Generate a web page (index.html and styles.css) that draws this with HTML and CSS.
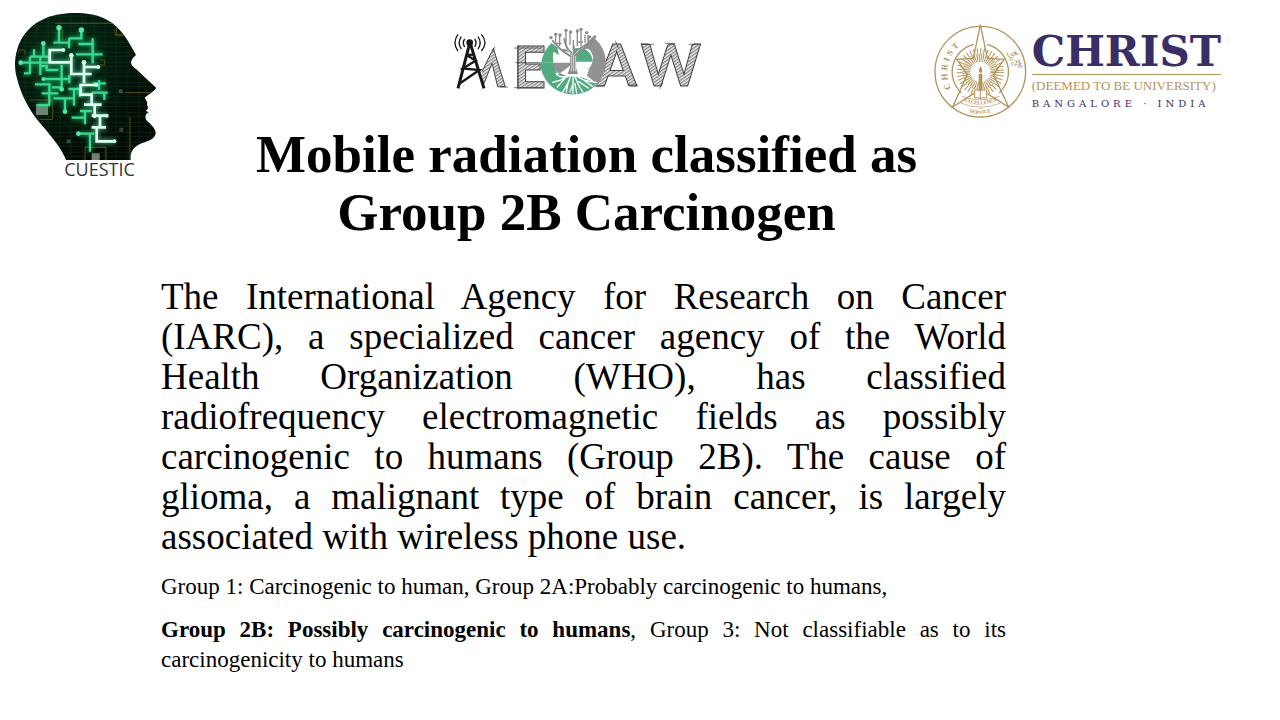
FILE: index.html
```html
<!DOCTYPE html>
<html lang="en">
<head>
<meta charset="utf-8">
<meta name="viewport" content="width=device-width, initial-scale=1">
<title>Mobile radiation classified as Group 2B Carcinogen</title>
<link rel="stylesheet" href="styles.css">
</head>
<body>
<div class="slide">
  <figure class="cuestic">
    <svg class="head-art" viewBox="0 0 480 480" aria-hidden="true">
      <defs>
        <clipPath id="head"><path d="M198 480C190 455 160 415 125 375C85 330 62 280 51 235C43 205 43 180 51 150C63 105 95 70 140 53C190 33 270 35 310 54C350 72 375 105 391 135L408 165C400 172 394 179 393 188C394 195 400 200 408 207L469 264C460 276 444 284 434 293C438 300 444 307 441 315C444 320 447 328 437 332L446 337C435 343 435 350 438 359C450 371 466 384 467 397C468 411 455 420 438 425C410 434 388 447 392 480Z"/></clipPath>
        <radialGradient id="headFill" cx=".4" cy=".35" r=".65"><stop offset="0" stop-color="#04301a"/><stop offset=".5" stop-color="#02180d"/><stop offset="1" stop-color="#020803"/></radialGradient>
        <filter id="glow" x="-20%" y="-20%" width="140%" height="140%"><feGaussianBlur stdDeviation="6"/></filter>
        <pattern id="board" width="34" height="30" patternUnits="userSpaceOnUse"><path d="M0 7H34M9 0V30M0 19H34" stroke="#174319" stroke-width="2" opacity=".55"/></pattern>
      </defs>
      <g clip-path="url(#head)">
        <rect width="480" height="480" fill="url(#headFill)"/>
        <rect width="480" height="480" fill="url(#board)"/>
        <g fill="none" stroke="#584c18" stroke-width="3"><path d="M165 70H350V105H380M188 90V120M55 150H75V165M88 300H158V358H118M255 480V442H318V480M390 350V480M375 278H450M345 85V105H372M300 180H314V195H300"/></g>
        <g fill="#747f76"><path d="M108 312H144V345H108zM275 460H299V480H275z"/><path d="M358 383H370V395H358zM200 418H212V430H200zM356 268H368V280H356z" opacity=".5"/></g>
        <path d="M177 85V128M160 128H207V145M207 115H244V90M207 115V130M235 132H280M278 115V190M228 163H308M130 130V168M102 148V170M62 188H145M90 170H145M90 170V222M72 220H90M121 170V225M121 198H140V210H175M185 195V268M130 237H208M208 225V250M105 253H148V285M125 280H175M148 280V315M112 315H150M160 295H225M195 295V335M222 265V317M205 267H240M240 265V290M297 240V270M280 250H318M275 278H323M313 278V300M240 333H275M255 333V373M215 353H255M235 401H283M270 401V455M155 262H185" fill="none" stroke="#19c776" stroke-width="15" opacity=".55" filter="url(#glow)"/>
        <path d="M177 85V128M160 128H207V145M207 115H244V90M207 115V130M235 132H280M278 115V190M228 163H308M130 130V168M102 148V170M62 188H145M90 170H145M90 170V222M72 220H90M121 170V225M121 198H140V210H175M185 195V268M130 237H208M208 225V250M105 253H148V285M125 280H175M148 280V315M112 315H150M160 295H225M195 295V335M222 265V317M205 267H240M240 265V290M297 240V270M280 250H318M275 278H323M313 278V300M240 333H275M255 333V373M215 353H255M235 401H283M270 401V455M155 262H185" fill="none" stroke="#3bd990" stroke-width="7"/>
        <g fill="#55e6a4"><circle cx="177" cy="83" r="8"/><circle cx="244" cy="90" r="8"/><circle cx="130" cy="130" r="7"/><circle cx="62" cy="188" r="7"/><circle cx="235" cy="401" r="7"/><circle cx="195" cy="335" r="7"/><circle cx="185" cy="268" r="7"/><circle cx="130" cy="237" r="6"/></g>
        <path d="M190 150H149V187H214M214 167V222H275M252 187V250M252 201H295M289 255H242V284H275V314M252 314H305M284 314V354M275 347H320M300 347V382M275 382H318M290 382V424H345" fill="none" stroke="#6df0b8" stroke-width="14" opacity=".6" filter="url(#glow)"/>
        <path d="M190 150H149V187H214M214 167V222H275M252 187V250M252 201H295M289 255H242V284H275V314M252 314H305M284 314V354M275 347H320M300 347V382M275 382H318M290 382V424H345" fill="none" stroke="#dcfff0" stroke-width="8"/>
        <g fill="#c4ffe2"><circle cx="190" cy="150" r="6"/><circle cx="214" cy="166" r="7"/><circle cx="252" cy="187" r="7"/><circle cx="295" cy="201" r="6"/><circle cx="289" cy="255" r="6"/><circle cx="320" cy="347" r="6"/><circle cx="343" cy="424" r="6"/></g>
      </g>
    </svg>
    <figcaption class="cuestic-name">CUESTIC</figcaption>
  </figure>

  <div class="content">
    <header class="logos">
      <svg class="megaw" viewBox="0 0 810 240" role="img" aria-label="MEGAW">
        <defs>
          <pattern id="hatch" width="8" height="8" patternUnits="userSpaceOnUse" patternTransform="rotate(-35)"><rect width="8" height="8" fill="#eee"/><path d="M0 2H8" stroke="#666" stroke-width="3"/></pattern>
        </defs>
        <g class="sketch">
          <text x="220" y="204">E</text>
          <text x="470" y="197">A</text>
          <text x="602" y="199">W</text>
        </g>
        <path d="M126 155L160 85L196 200H173L156 130L128 200" fill="url(#hatch)" stroke="#444" stroke-width="3"/>
        <path d="M222 84H304M234 75V208M222 203H308M226 128H302M460 198H496M562 195H594M604 73H642M674 70H706M746 73H775M165 80L158 94M180 201H204M526 62L535 84M658 206L668 190" stroke="#333" stroke-width="2"/>
        <g fill="none" stroke="#171717">
          <path d="M89 70L54 205M91 70L132 205" stroke-width="9"/><path d="M80 105L107 122L69 145L118 150L57 192M78 105L100 104" stroke-width="7"/>
          <path d="M74 57Q66 68 74 81M64 50Q51 68 64 87M54 43Q36 68 54 93M104 57Q112 68 104 81M114 50Q127 68 114 87M124 43Q146 68 124 93" stroke-width="4"/>
        </g>
        <circle cx="89" cy="68" r="10" fill="#171717"/>
        <path d="M304 127A96 96 0 0 1 334 70L330 66L352 82L357 105L340 95Q337 112 340 127Z" fill="#52aa80"/>
        <path d="M301 127H340L352 162L395 158L468 195A98 98 0 0 1 301 127" fill="#52aa80"/>
        <path d="M340 128H398V164Q345 174 340 128" fill="#929292"/>
        <path d="M398 125V86Q450 75 459 125Z" fill="#52aa80"/>
        <path d="M457 50A96 96 0 0 1 494 155L471 200L457 180L434 162L425 140L447 146Q472 112 446 87L433 86Z" fill="#929292"/>
        <path d="M360 160Q395 135 402 127L447 148L438 175L398 175Z" fill="#fff"/>
        <path d="M340 185Q400 150 466 190A98 98 0 0 1 340 200Z" fill="#52aa80"/>
        <g fill="none" stroke="#fff" stroke-width="4" stroke-linecap="round">
          <path d="M397 150Q390 175 338 187M385 168Q357 175 348 160M375 175L352 201M392 165Q387 190 368 216M384 189L379 216M399 160V220M403 160Q408 185 428 216M416 185L445 204M407 166Q425 183 469 187M430 179L458 199M398 195L390 216M405 190L410 219"/>
        </g>
        <path d="M391 98H410L408 143L414 162H382L390 144Z" fill="#8b8b8b"/>
        <g fill="none" stroke="#8b8b8b" stroke-width="6">
          <path d="M394 110Q372 96 360 86L337 61M399 105Q381 88 378 76L372 55M401 105V76M405 108Q415 86 430 80L463 55M397 100Q387 90 367 90M408 99Q430 94 445 72V45"/>
          <path d="M347 65V45M359 78V48M378 70V33M390 75V38M400 76V60M412 78V35M423 80V30M435 68V45M365 70H348M429 66H411" stroke-width="4"/>
        </g>
        <path d="M395 104V154M401 104V154M407 108V154" stroke="#fff" stroke-width="2"/>
        <g fill="#8b8b8b"><circle cx="333" cy="53" r="5"/><circle cx="347" cy="43" r="5"/><circle cx="360" cy="45" r="5"/><circle cx="378" cy="31" r="5"/><circle cx="392" cy="36" r="5"/><circle cx="412" cy="33" r="5"/><circle cx="423" cy="28" r="5"/><circle cx="440" cy="38" r="5"/><circle cx="464" cy="51" r="5"/><circle cx="450" cy="51" r="4"/></g>
        <path d="M398 105L380 88M398 101V89M404 104L418 89" stroke="#fff" stroke-width="2"/>
      </svg>
      <div class="christ">
        <svg class="seal" viewBox="0 0 300 300" role="img" aria-label="Christ seal: Excellence and Service">
          <defs>
            <path id="arcLeft" d="M64 205A100 100 0 0 1 112 64"/>
            <path id="arcRight" d="M238 98A104 104 0 0 1 254 180"/>
            <path id="arcLow" d="M102 242Q151 266 206 240"/>
            <path id="arcBase" d="M118 277Q150 287 190 275"/>
          </defs>
          <g fill="none" stroke="#b3945a">
            <circle cx="151" cy="155" r="136" stroke-width="4"/>
            <path d="M131 73A85 85 0 0 0 94 218M171 73A85 85 0 0 1 208 218" stroke-width="4"/>
            <circle cx="151" cy="156" r="42" stroke-width="24" stroke-dasharray="3 3"/>
            <circle cx="151" cy="156" r="62" stroke-width="18" stroke-dasharray="3 7"/>
            <path d="M151 14L172 115L223 118L190 163L236 261L151 208L68 261L112 163L80 118L130 115Z" stroke-width="4"/>
            <path d="M96 229Q151 250 208 229M92 249Q151 274 212 249" stroke-width="2"/>
          </g>
          <circle cx="151" cy="155" r="29" fill="#fff"/>
          <path d="M146 162H157V208H146ZM152 139Q162 153 152 161Q141 153 152 139" fill="#b3945a"/>
          <path d="M134 210Q145 207 151 214Q158 207 170 210V234Q158 231 151 236Q145 231 134 234ZM151 214V236" fill="#fff" stroke="#b3945a" stroke-width="3"/>
          <text class="seal-name"><textPath href="#arcLeft">CHRIST</textPath></text>
          <text class="seal-native"><textPath href="#arcRight">ಕ್ರೈಸ್ಟ್</textPath></text>
          <text class="seal-motto"><textPath href="#arcLow">EXCELLENCE</textPath></text>
          <text class="seal-and" x="143" y="268">AND</text>
          <text class="seal-motto"><textPath href="#arcBase">SERVICE</textPath></text>
        </svg>
        <div class="christ-words">
          <div class="christ-name">CHRIST</div>
          <div class="christ-status">(DEEMED TO BE UNIVERSITY)</div>
          <div class="christ-place">BANGALORE · INDIA</div>
        </div>
      </div>
    </header>

    <main class="message">
      <h1 class="title">Mobile radiation classified as<br>Group 2B Carcinogen</h1>
      <p class="lead">The International Agency for Research on Cancer<br>
        (IARC), a specialized cancer agency of the World<br>
        Health Organization (WHO), has classified<br>
        radiofrequency electromagnetic fields as possibly<br>
        carcinogenic to humans (Group 2B). The cause of<br>
        glioma, a malignant type of brain cancer, is largely
        <span class="lead-end">associated with wireless phone use.</span></p>
      <p class="note">Group 1: Carcinogenic to human, Group 2A:Probably carcinogenic to humans,</p>
      <p class="note"><strong>Group 2B: Possibly carcinogenic to humans</strong>, Group 3: Not classifiable as to its carcinogenicity to humans</p>
    </main>
  </div>
</div>
</body>
</html>
```
FILE: styles.css
```css
* { box-sizing: border-box; }

body {
  margin: 0;
  background: #fff;
  color: #000;
  font-family: "Liberation Serif", "Times New Roman", serif;
}

.slide {
  display: grid;
  grid-template-columns: 161px 1fr;
  min-height: 100vh;
}

.cuestic { margin: 0; }

.head-art { display: block; width: 160px; height: 160px; }

.cuestic-name {
  padding-left: 38px;
  text-align: center;
  color: #333;
  font: 18px/18px "Open Sans", "Noto Sans", sans-serif;
}

.logos {
  display: flex;
  justify-content: space-between;
  padding: 20px 59px 0 279px;
}

.megaw { width: 270px; height: 80px; }

.sketch {
  font: bold 172px Lato, "Liberation Sans", sans-serif;
  fill: url(#hatch);
  stroke: #444;
  stroke-width: 3px;
}

.christ { display: flex; gap: 2px; }

.seal { width: 100px; height: 100px; }

.seal-name { font: bold 26px "Liberation Serif", serif; letter-spacing: 8px; fill: #b3945a; }
.seal-native { font: 34px "Noto Sans", sans-serif; fill: #b3945a; }
.seal-motto { font: bold 15px "Liberation Serif", serif; fill: #b3945a; }
.seal-and { font: bold 8px "Liberation Serif", serif; fill: #b3945a; }

.christ-words { padding-top: 10px; white-space: nowrap; }

.christ-name {
  border-bottom: 1px solid #b3945a;
  color: #3a2e67;
  font: bold 42px/44px "DejaVu Serif", serif;
}

.christ-status { color: #b3945a; font-size: 13px; line-height: 22px; }

.christ-place {
  color: #3a2e67;
  font: 10px/14px "DejaVu Serif", serif;
  letter-spacing: 4px;
}

.message { padding: 5px 274px 0 0; }

.title {
  margin: 0 0 36px;
  padding-left: 6px;
  text-align: center;
  font-size: 53px;
  line-height: 58px;
}

.lead {
  margin: 0 0 15px;
  text-align: justify;
  text-align-last: justify;
  font-size: 37px;
  line-height: 40px;
}

.lead-end { display: block; text-align-last: left; }

.note {
  margin: 0 0 13px;
  text-align: justify;
  font-size: 23px;
  line-height: 30px;
}
```
